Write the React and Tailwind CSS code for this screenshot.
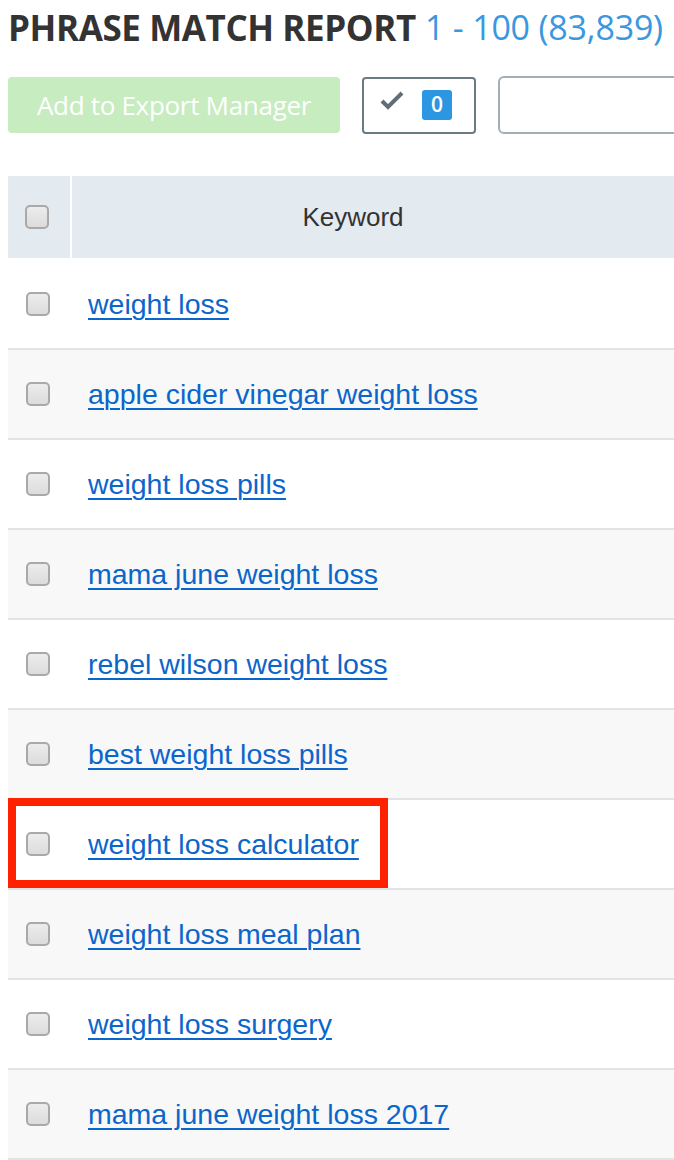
import React from "react";

const rows = [
  "weight loss",
  "apple cider vinegar weight loss",
  "weight loss pills",
  "mama june weight loss",
  "rebel wilson weight loss",
  "best weight loss pills",
  "weight loss calculator",
  "weight loss meal plan",
  "weight loss surgery",
  "mama june weight loss 2017",
];

function Box() {
  return (
    <div className="w-[24px] h-[24px] rounded-[5px] border-2 border-[#a9a9a9] bg-gradient-to-b from-[#ececec] to-[#dcdcdc]" />
  );
}

export default function App() {
  return (
    <div className="w-[674px] h-[1160px] bg-white overflow-hidden">
      <div className="pl-2 pt-[4px] h-[50px] flex items-center whitespace-nowrap leading-none" style={{ fontFamily: '"Open Sans", sans-serif' }}>
        <span className="font-bold text-[#333] text-[35px] tracking-[-0.4px]">PHRASE MATCH REPORT</span>
        <span className="ml-[9px] text-[#3a97e0] text-[34px] tracking-[-0.2px]">1 - 100 (83,839)</span>
      </div>
      <div className="flex items-center mt-[26px] pl-2 h-[58px] whitespace-nowrap" style={{ fontFamily: '"Open Sans", sans-serif' }}>
        <div className="shrink-0 w-[332px] h-[56px] rounded-[4px] bg-[#c6ecc0] flex items-center justify-center text-white text-[26px] font-medium tracking-[-0.3px]">
          Add to Export Manager
        </div>
        <div className="shrink-0 ml-[22px] w-[114px] h-[57px] rounded-[4px] border-2 border-[#6b7b84] flex items-center pl-[16px]">
          <svg width="24" height="20" viewBox="0 0 24 20" className="mt-[-10px]">
            <path d="M2 11 L8 17 L22 3" fill="none" stroke="#5f6e77" strokeWidth="4" />
          </svg>
          <div className="ml-[18px] w-[30px] h-[30px] rounded-[3px] bg-[#2d96e3] text-white text-[21px] font-semibold flex items-center justify-center">0</div>
        </div>
        <div className="shrink-0 ml-[22px] w-[200px] h-[58px] rounded-[6px] border-2 border-[#a3aeb5]" />
      </div>
      <div className="mt-[42px] pl-2" style={{ fontFamily: '"Liberation Sans", Arial, sans-serif' }}>
        <div className="flex h-[84px] bg-[#e3eaf0] border-b-2 border-white w-[700px]">
          <div className="w-[64px] flex items-center justify-center pr-[4px] border-r-2 border-white">
            <Box />
          </div>
          <div className="w-[562px] flex items-center justify-center text-[26px] text-[#333]">Keyword</div>
        </div>
        {rows.map((r, i) => (
          <div
            key={r}
            className={`relative flex h-[90px] w-[700px] border-b-2 border-[#e1e4e7] ${i % 2 === 0 ? "bg-white" : "bg-[#f8f8f8]"}`}
          >
            <div className="w-[66px] flex items-center justify-center pr-[6px]">
              <Box />
            </div>
            <div className="flex items-center pl-[14px]">
              <a className="text-[28.5px] text-[#0b66cc] underline decoration-[2px] underline-offset-[4px]" href="#">
                {r}
              </a>
            </div>
            {r === "weight loss calculator" && (
              <div className="absolute left-0 top-[-2px] w-[380px] h-[90px] border-[8px] border-[#ff2200]" />
            )}
          </div>
        ))}
      </div>
    </div>
  );
}
